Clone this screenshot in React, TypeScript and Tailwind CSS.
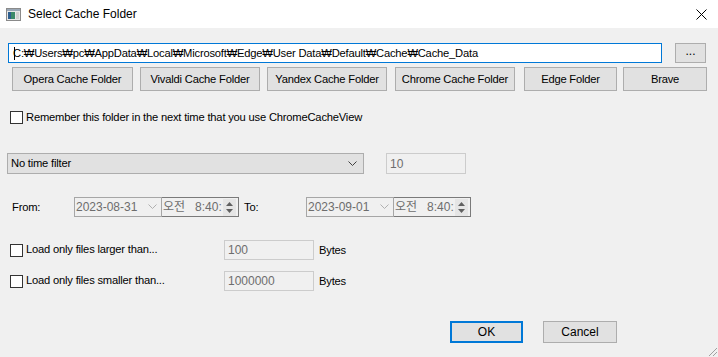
import React from "react";

const font = { fontFamily: '"Liberation Sans", "Noto Sans CJK KR", sans-serif' };
const T = "text-[11.2px] tracking-[-0.2px]";

function Btn({ w, ml, label }: { w: string; ml: string; label: string }) {
  return (
    <div
      className={`${w} ${ml} h-[24px] shrink-0 bg-[#e1e1e1] border border-[#adadad] flex items-center justify-center text-[11.2px] tracking-[-0.2px] text-black whitespace-nowrap`}
    >
      {label}
    </div>
  );
}

function Check({ label }: { label: string }) {
  return (
    <div className="flex items-center">
      <div className="w-[13px] h-[13px] border border-[#333333] bg-white shrink-0" />
      <span className="ml-[3px] text-[11.2px] tracking-[-0.2px] text-[#000000] leading-none whitespace-nowrap">{label}</span>
    </div>
  );
}

function Chevron({ color }: { color: string }) {
  return (
    <svg width="9" height="6" viewBox="0 0 9 6" className="shrink-0">
      <path d="M0.5 0.5 L4.5 4.5 L8.5 0.5" fill="none" stroke={color} strokeWidth="1" />
    </svg>
  );
}

function Spin() {
  return (
    <div className="w-[13px] h-[17px] flex flex-col items-center justify-center gap-[3px] bg-[#e5e5e5] shrink-0">
      <svg width="7" height="4" viewBox="0 0 7 4">
        <path d="M0 4 L3.5 0 L7 4 Z" fill="#606060" />
      </svg>
      <svg width="7" height="4" viewBox="0 0 7 4">
        <path d="M0 0 L3.5 4 L7 0 Z" fill="#606060" />
      </svg>
    </div>
  );
}

function DateTime({ date }: { date: string }) {
  return (
    <div className="flex h-[20px]">
      <div className="w-[88px] h-full border border-[#a6a6a6] bg-[#f0f0f0] flex items-center pl-[1px] pr-[4px]">
        <span className="text-[12px] text-[#6d6d6d] flex-1">{date}</span>
        <Chevron color="#b0b0b0" />
      </div>
      <div className="w-[77px] h-full border border-l-0 border-[#7a7a7a] bg-[#f0f0f0] flex items-center pl-[1px] pr-[2px]">
        <span className="text-[12px] text-[#6d6d6d] flex-1 whitespace-nowrap">
          오전&nbsp;&nbsp;&nbsp;8:40:
        </span>
        <Spin />
      </div>
    </div>
  );
}

export default function App() {
  return (
    <div className="w-[718px] h-[357px] bg-[#f0f0f0] relative overflow-hidden" style={font}>
      {/* title bar */}
      <div className="h-[28px] bg-white flex items-center">
        <svg width="15" height="13" viewBox="0 0 15 13" className="ml-[6px] shrink-0">
          <rect x="0.5" y="0.5" width="14" height="12" fill="#e8e8e8" stroke="#8a8a8a" />
          <rect x="1" y="1" width="13" height="2" fill="#9aa7b5" />
          <rect x="2" y="4" width="7" height="7" fill="#3d8a6a" />
          <rect x="2" y="4" width="3" height="7" fill="#2e5f8f" />
          <rect x="10" y="4" width="3" height="7" fill="#d0d0d0" />
        </svg>
        <span className="ml-[7px] text-[12px] text-black">Select Cache Folder</span>
        <div className="flex-1" />
        <svg width="11" height="11" viewBox="0 0 11 11" className="mr-[11px]">
          <path d="M0.5 0.5 L10.5 10.5 M10.5 0.5 L0.5 10.5" stroke="#000" strokeWidth="1" />
        </svg>
      </div>

      {/* path row */}
      <div className="flex mt-[15px] pl-[8px]">
        <div className="w-[654px] h-[20px] bg-white border border-[#0078d7] flex items-center pl-[4px] relative">
          <span className="text-[11.2px] tracking-[-0.2px] text-black whitespace-nowrap">
            C:₩Users₩pc₩AppData₩Local₩Microsoft₩Edge₩User Data₩Default₩Cache₩Cache_Data
          </span>
          <div className="absolute left-[5px] top-[3px] w-[1px] h-[13px] bg-black" />
        </div>
        <div className="ml-[13px] w-[31px] h-[20px] bg-[#e1e1e1] border border-[#adadad] flex items-center justify-center text-[12px] pb-[4px]">
          ...
        </div>
      </div>

      {/* browser buttons */}
      <div className="flex mt-[4px] pl-[12px]">
        <Btn w="w-[121px]" ml="ml-0" label="Opera Cache Folder" />
        <Btn w="w-[120px]" ml="ml-[7px]" label="Vivaldi Cache Folder" />
        <Btn w="w-[120px]" ml="ml-[7px]" label="Yandex Cache Folder" />
        <Btn w="w-[120px]" ml="ml-[8px]" label="Chrome Cache Folder" />
        <Btn w="w-[93px]" ml="ml-[9px]" label="Edge Folder" />
        <Btn w="w-[84px]" ml="ml-[6px]" label="Brave" />
      </div>

      {/* remember */}
      <div className="mt-[20px] pl-[10px]">
        <Check label="Remember this folder in the next time that you use ChromeCacheView" />
      </div>

      {/* time filter */}
      <div className="flex mt-[29px] pl-[7px]">
        <div className="w-[357px] h-[21px] bg-[#e1e1e1] border border-[#adadad] flex items-center pl-[3px] pr-[6px]">
          <span className={`${T} text-black flex-1`}>No time filter</span>
          <Chevron color="#404040" />
        </div>
        <div className="ml-[22px] w-[80px] h-[21px] bg-[#f0f0f0] border border-[#cccccc] flex items-center pl-[3px]">
          <span className="text-[12px] text-[#6d6d6d]">10</span>
        </div>
      </div>

      {/* from / to */}
      <div className="flex items-center mt-[23px] pl-[12px]">
        <span className={`w-[62px] ${T} text-black`}>From:</span>
        <DateTime date="2023-08-31" />
        <span className={`ml-[5px] w-[62px] ${T} text-black`}>To:</span>
        <DateTime date="2023-09-01" />
      </div>

      {/* larger */}
      <div className="flex items-center mt-[23px] pl-[10px]">
        <div className="w-[214px]">
          <Check label="Load only files larger than..." />
        </div>
        <div className="w-[90px] h-[20px] bg-[#f0f0f0] border border-[#cccccc] flex items-center pl-[3px]">
          <span className="text-[12px] text-[#6d6d6d]">100</span>
        </div>
        <span className={`ml-[5px] ${T} text-black`}>Bytes</span>
      </div>

      {/* smaller */}
      <div className="flex items-center mt-[11px] pl-[10px]">
        <div className="w-[214px]">
          <Check label="Load only files smaller than..." />
        </div>
        <div className="w-[90px] h-[20px] bg-[#f0f0f0] border border-[#cccccc] flex items-center pl-[3px]">
          <span className="text-[12px] text-[#6d6d6d]">1000000</span>
        </div>
        <span className={`ml-[5px] ${T} text-black`}>Bytes</span>
      </div>

      {/* ok cancel */}
      <div className="flex mt-[30px] pl-[450px]">
        <div className="w-[73px] h-[22px] bg-[#e1e1e1] border-2 border-[#0078d7] flex items-center justify-center text-[12px] text-black">
          OK
        </div>
        <div className="ml-[20px] w-[74px] h-[22px] bg-[#e1e1e1] border border-[#adadad] flex items-center justify-center text-[12px] text-black">
          Cancel
        </div>
      </div>

      {/* resize grip */}
      <svg width="12" height="12" viewBox="0 0 12 12" className="absolute right-0 bottom-0">
        <path d="M11 3 L3 11 M11 7 L7 11 M11 11 L11 11" stroke="#a0a0a0" strokeWidth="1" />
      </svg>
    </div>
  );
}
